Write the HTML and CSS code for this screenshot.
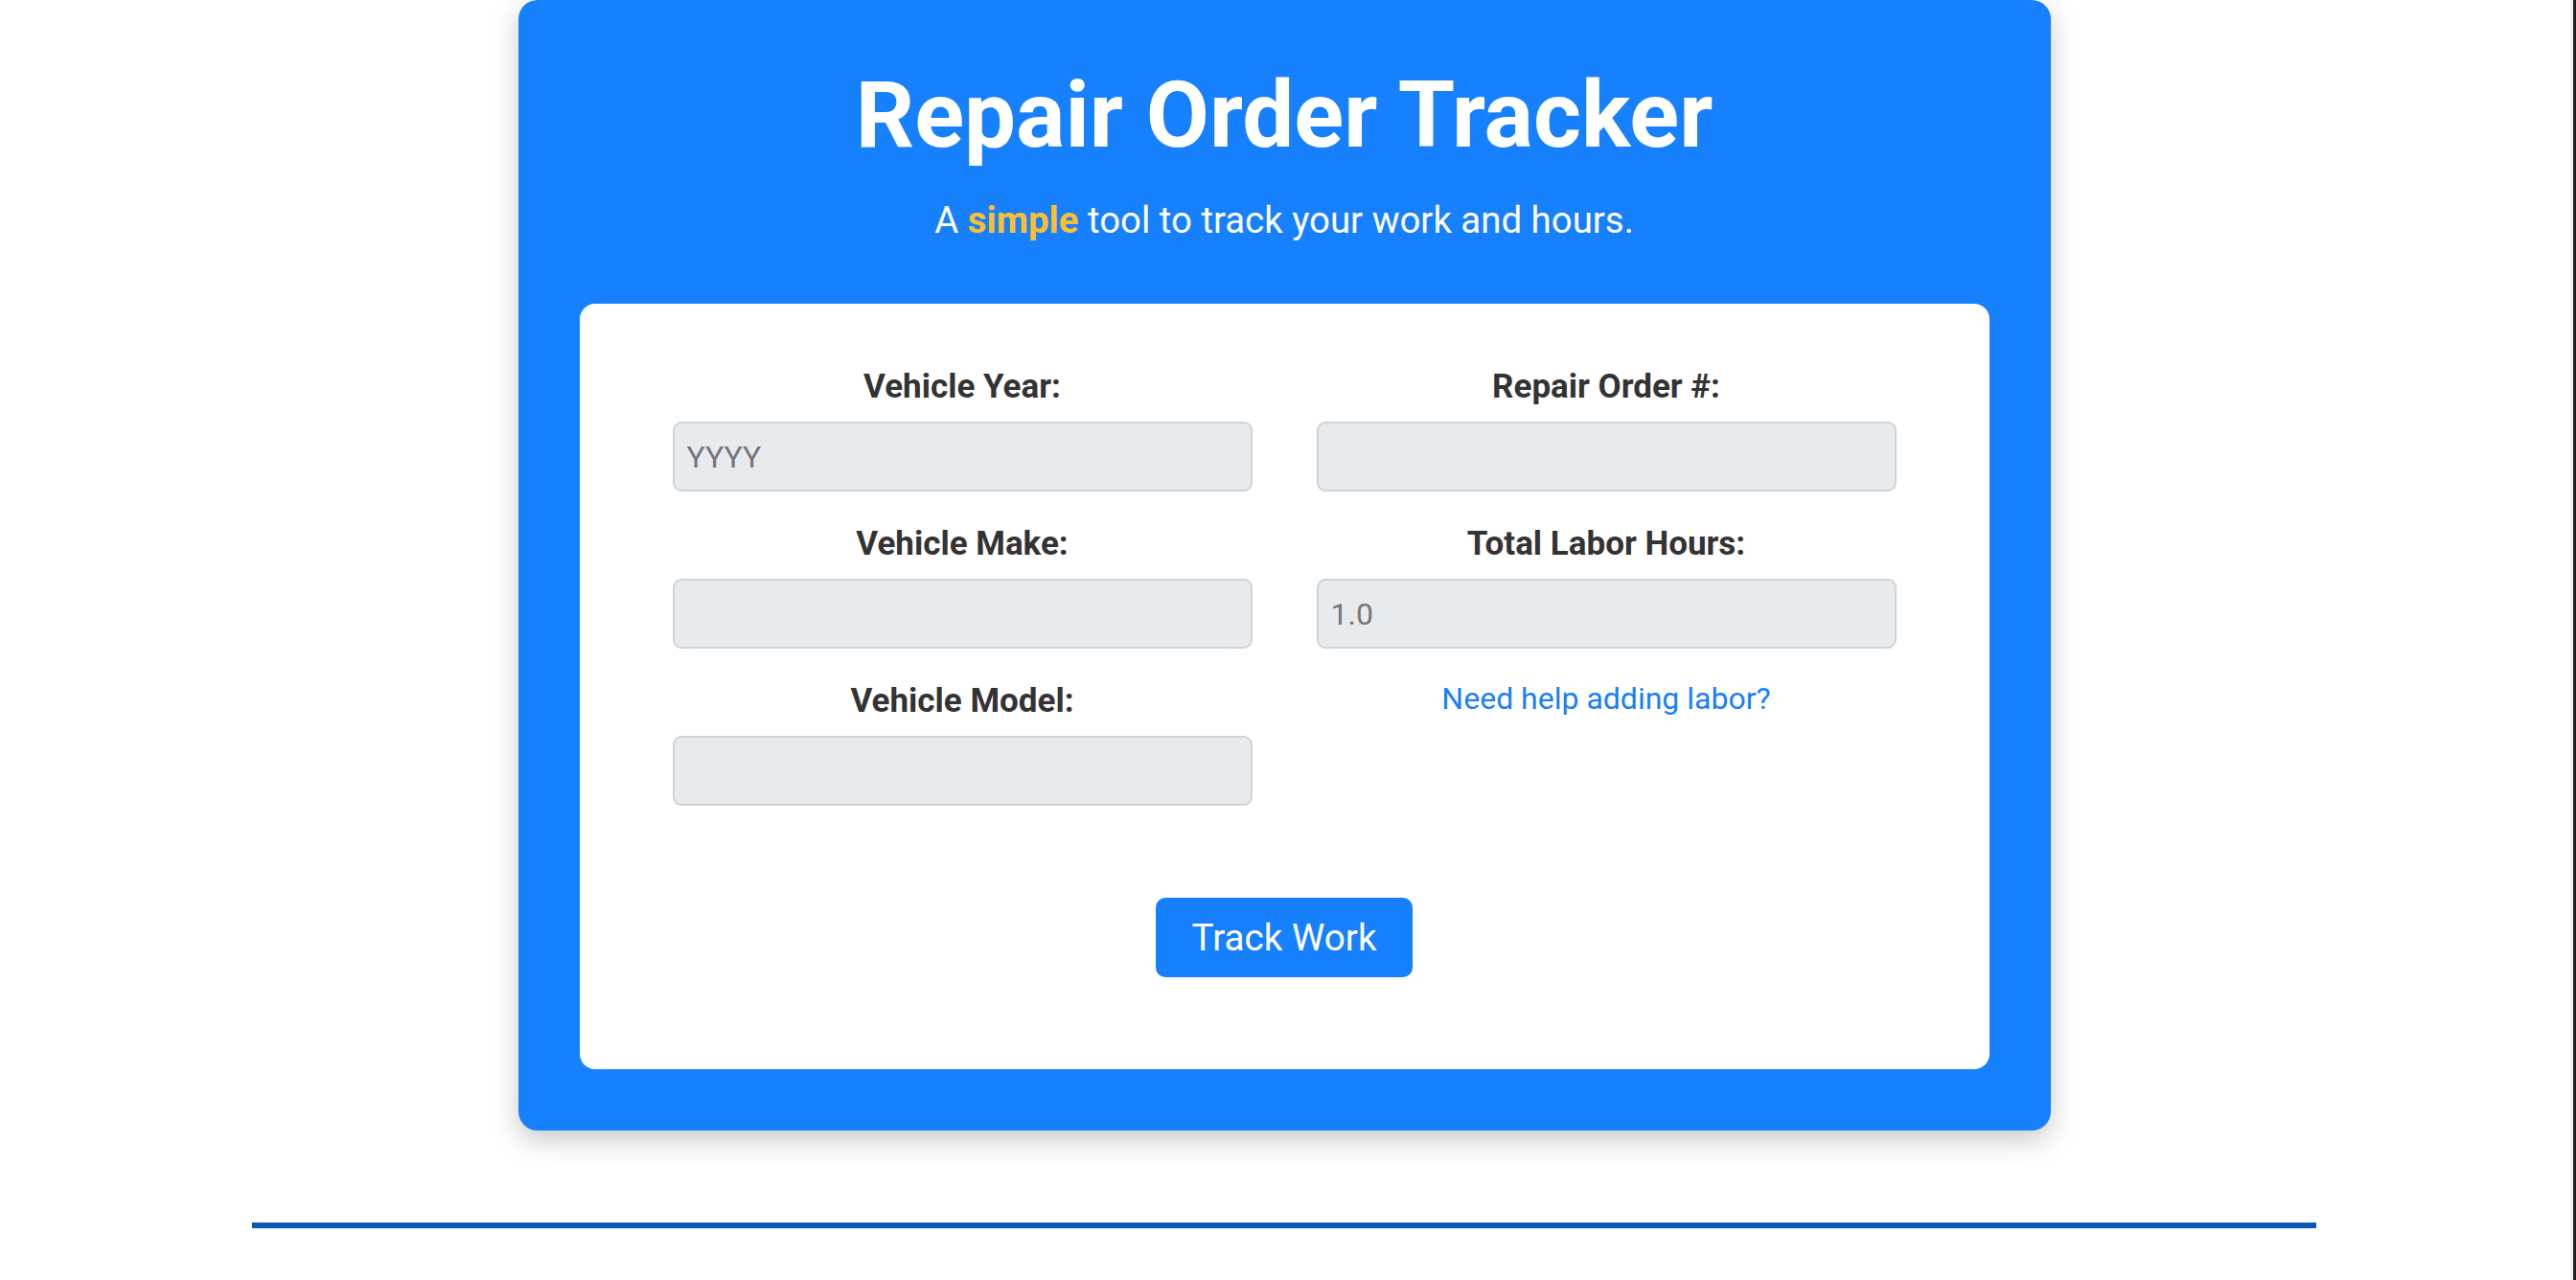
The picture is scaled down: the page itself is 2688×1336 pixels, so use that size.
FILE: index.html
```html
<!DOCTYPE html>
<html lang="en">
<head>
<meta charset="utf-8">
<title>Repair Order Tracker</title>
<link rel="stylesheet" href="styles.css">
</head>
<body>
<div class="shell">
  <div class="page">
    <main class="tracker">
      <h1 class="title">Repair Order Tracker</h1>
      <p class="subtitle">A <strong class="accent">simple</strong> tool to track your work and hours.</p>
      <form class="panel">
        <div class="grid">
          <div class="col">
            <div class="field">
              <label class="label" for="year">Vehicle Year:</label>
              <input class="input" id="year" type="text" placeholder="YYYY">
            </div>
            <div class="field">
              <label class="label" for="make">Vehicle Make:</label>
              <input class="input" id="make" type="text">
            </div>
            <div class="field">
              <label class="label" for="model">Vehicle Model:</label>
              <input class="input" id="model" type="text">
            </div>
          </div>
          <div class="col">
            <div class="field">
              <label class="label" for="ro">Repair Order #:</label>
              <input class="input" id="ro" type="text">
            </div>
            <div class="field">
              <label class="label" for="hours">Total Labor Hours:</label>
              <input class="input" id="hours" type="text" placeholder="1.0">
            </div>
            <div class="field">
              <a class="help" href="#">Need help adding labor?</a>
            </div>
          </div>
        </div>
        <div class="actions">
          <button class="button" type="button">Track Work</button>
        </div>
      </form>
    </main>
    <hr class="rule">
  </div>
  <div class="edge"></div>
</div>
</body>
</html>
```
FILE: styles.css
```css
* { box-sizing: border-box; }
html, body { margin: 0; padding: 0; background: #ffffff; }
body {
  font-family: Roboto, "Liberation Sans", Arial, sans-serif;
  color: #333333;
  overflow: hidden;
}
.shell {
  display: flex;
  min-height: 1336px;
}
.page {
  flex: 1;
  display: flex;
  flex-direction: column;
  align-items: center;
}
.edge {
  width: 8px;
  background: linear-gradient(to right, #ffffff 0, #ececec 5px, #2a2a2e 5px, #1a1a1e 8px);
}
.tracker {
  width: 1599px;
  background: #1780fd;
  border-radius: 20px;
  padding: 62px 64px 64px;
  box-shadow: 0 10px 28px rgba(0, 0, 0, 0.22);
  text-align: center;
}
.title {
  margin: 0;
  font-size: 96px;
  line-height: 116px;
  font-weight: 700;
  color: #ffffff;
}
.subtitle {
  margin: 28px 0 0;
  font-size: 38.4px;
  line-height: 48px;
  color: #ffffff;
}
.accent { color: #fcbf2e; font-weight: 700; }
.panel {
  margin-top: 63px;
  background: #ffffff;
  border-radius: 16px;
  padding: 67px 97px 96px;
}
.grid {
  display: grid;
  grid-template-columns: 605px 605px;
  column-gap: 67px;
}
.col {
  display: flex;
  flex-direction: column;
  gap: 35px;
}
.field {
  display: flex;
  flex-direction: column;
  align-items: stretch;
}
.label {
  display: block;
  font-size: 35px;
  line-height: 40px;
  font-weight: 700;
  color: #333333;
  margin-bottom: 16px;
}
.input {
  height: 73px;
  width: 100%;
  background: #e8ebee;
  border: 2px solid #cfd3d8;
  border-radius: 9px;
  padding: 0 13px;
  font-family: inherit;
  font-size: 32px;
  color: #333333;
  outline: none;
}
.input::placeholder { color: #767676; opacity: 1; }
.help {
  display: block;
  font-size: 32px;
  line-height: 34px;
  color: #1a7ff6;
  text-decoration: none;
}
.actions {
  margin-top: 96px;
  display: flex;
  justify-content: center;
}
.button {
  height: 83px;
  padding: 0 37px;
  background: #1780fd;
  color: #ffffff;
  border: none;
  border-radius: 10px;
  font-family: inherit;
  font-size: 38.7px;
}
.rule {
  width: 2154px;
  height: 6px;
  margin: 96px 0 0;
  border: none;
  background: #0b58b1;
}
```
